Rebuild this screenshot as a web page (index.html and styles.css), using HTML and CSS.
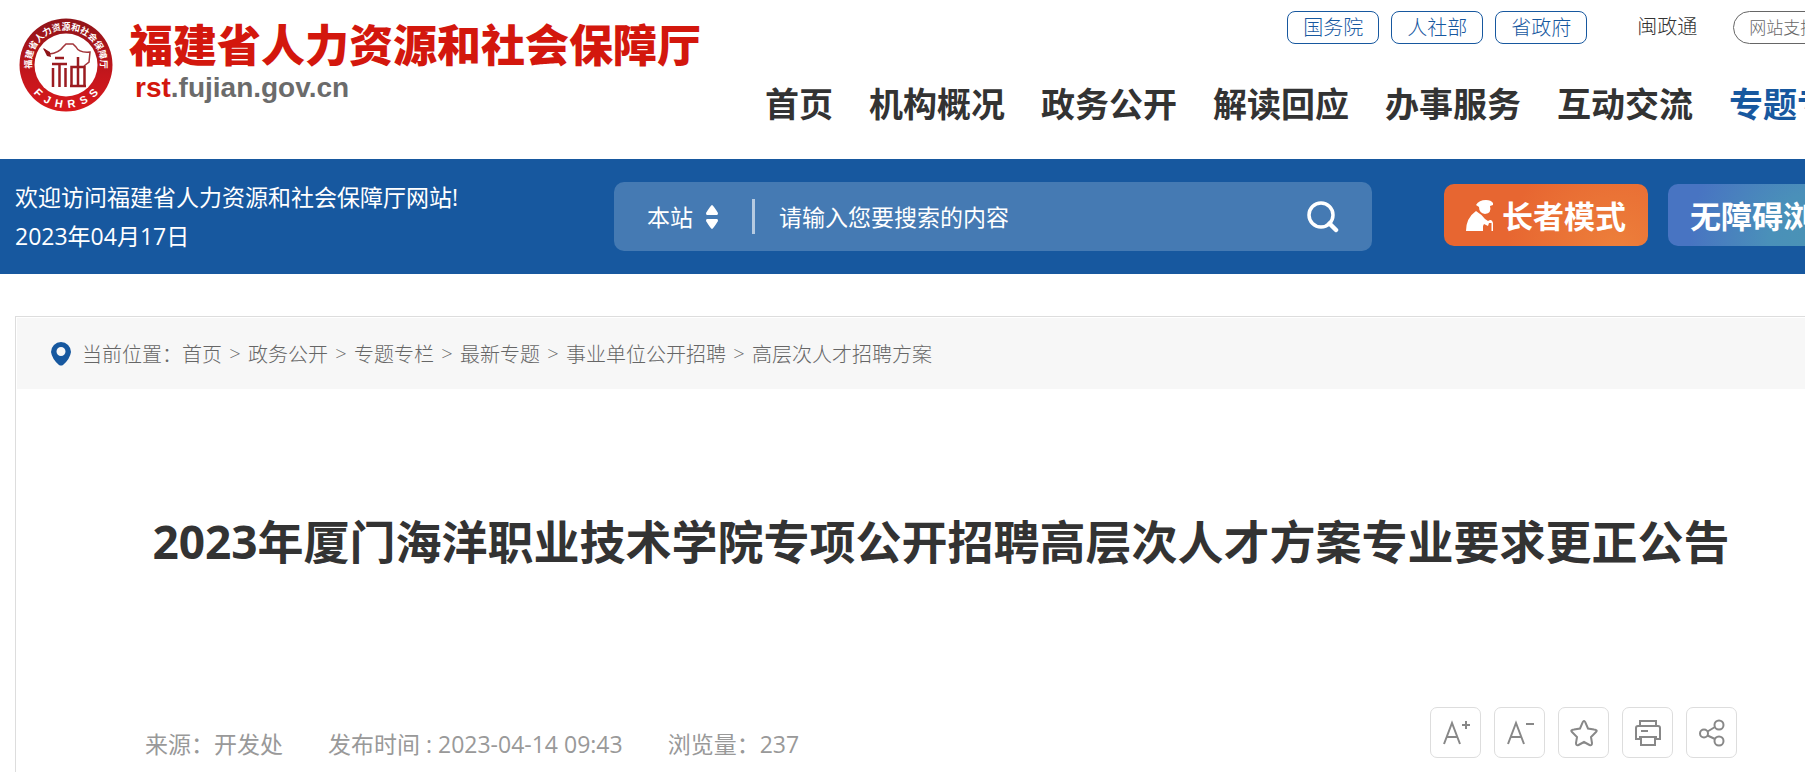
FILE: index.html
```html
<!DOCTYPE html>
<html lang="zh-CN">
<head>
  <meta charset="UTF-8">
  <meta name="viewport" content="width=device-width, initial-scale=1">
  <title>2023年厦门海洋职业技术学院专项公开招聘高层次人才方案专业要求更正公告</title>
  <link rel="stylesheet" href="styles.css">
</head>
<body>

<header class="header">
  <a class="logo" href="#">
    <svg class="emblem" viewBox="0 0 94 94" role="img" aria-label="福建省人力资源和社会保障厅">
      <defs>
        <linearGradient id="ring" x1="0" y1="0" x2="0" y2="1">
          <stop offset="0" stop-color="#8f1419"/>
          <stop offset="0.6" stop-color="#c4161c"/>
          <stop offset="1" stop-color="#d8191c"/>
        </linearGradient>
        <path id="arc-top" d="M13 52 A34.500 34.500 0 1 1 81 52"/>
        <path id="arc-bottom" d="M4 47 A43 43 0 0 0 90 47"/>
      </defs>
      <circle cx="47" cy="47" r="46.500" fill="url(#ring)"/>
      <circle cx="47" cy="47" r="31.500" fill="#fff"/>
      <text class="emblem-cn"><textPath href="#arc-top" startOffset="50%" text-anchor="middle">福建省人力资源和社会保障厅</textPath></text>
      <text class="emblem-en"><textPath href="#arc-bottom" startOffset="50%" text-anchor="middle">F  J  H  R  S  S</textPath></text>
      <!-- roof -->
      <path d="M25 31 L30 36 Q40 35 44 29 L47 26 H54 L57 29 Q60 35 71 34 L70 44 L65 48" fill="none" stroke="#a3363b" stroke-width="1.500"/>
      <path d="M24 30 L31 34 L32 39 L28 38 Z" fill="#8f1419"/>
      <g fill="none" stroke="#9b1b20" stroke-width="2.500">
        <path d="M36 40 H45 M33 46 H48 M34 50 V69 M40.500 46 V69 M46.500 50 V69"/>
        <path d="M52.500 68 V49 H65.500 V68 M59 39 V68 M51 68 H67"/>
      </g>
    </svg>
    <span class="logo-text">
      <span class="logo-name">福建省人力资源和社会保障厅</span>
      <span class="logo-domain"><b>rst</b>.fujian.gov.cn</span>
    </span>
  </a>

  <div class="header-right">
    <div class="top-links">
      <a class="top-box" href="#">国务院</a>
      <a class="top-box" href="#">人社部</a>
      <a class="top-box" href="#">省政府</a>
      <a class="top-plain" href="#">闽政通</a>
      <a class="top-pill" href="#">网站支持IPv6</a>
    </div>
    <nav class="nav">
      <a href="#">首页</a>
      <a href="#">机构概况</a>
      <a href="#">政务公开</a>
      <a href="#">解读回应</a>
      <a href="#">办事服务</a>
      <a href="#">互动交流</a>
      <a class="active" href="#">专题专栏</a>
    </nav>
  </div>
</header>

<div class="banner">
  <div class="welcome">
    <p>欢迎访问福建省人力资源和社会保障厅网站!</p>
    <p>2023年04月17日</p>
  </div>
  <form class="search">
    <label class="search-scope">
      <select aria-label="搜索范围">
        <option>本站</option>
      </select>
      <svg width="12" height="24" viewBox="0 0 12 24" fill="#fff"><path d="M6 0 Q7 0 12 8 Q12 10 11 10 H1 Q0 10 0 8 Q5 0 6 0 Z M1 14 H11 Q12 14 12 16 Q7 24 6 24 Q5 24 0 16 Q0 14 1 14 Z"/></svg>
    </label>
    <input class="search-input" type="text" placeholder="请输入您要搜索的内容" aria-label="搜索内容">
    <button class="search-btn" type="submit" aria-label="搜索">
      <svg width="32" height="32" viewBox="0 0 32 32" fill="none" stroke="#fff" stroke-width="3.500"><circle cx="14" cy="14" r="12"/><path d="M22.500 22.500 L29 29" stroke-width="4.500" stroke-linecap="round"/></svg>
    </button>
  </form>
  <button class="mode elder" type="button">
    <svg width="28" height="32" viewBox="0 0 28 32" fill="#fff"><path d="M10 6 Q13 1 20 1 Q25 1 27 4 L27 6 L24 7 Q26 14 19 15 Q13 14 13 8 Z"/><path d="M0 32 Q0 19 10 12 Q15 15 19 20 L22 22 Q26 19 27 24 V32 H25.500 V24 H23 L22 27 L18 25 L17 27 V32 Z"/></svg>
    长者模式
  </button>
  <button class="mode access" type="button">无障碍浏览</button>
</div>

<main class="main">
  <nav class="crumbs" aria-label="当前位置">
    <svg width="20" height="24" viewBox="0 0 20 24"><path d="M10 0 A10 10 0 0 1 20 10 Q19 17 12 23 Q10 24 8 23 Q1 17 0 10 A10 10 0 0 1 10 0 Z M10 5 A4.500 4.500 0 1 0 10 14 A4.500 4.500 0 1 0 10 5 Z" fill="#17589f"/></svg>
    <span class="crumbs-label">当前位置：</span>
    <a href="#">首页</a><span class="sep">&gt;</span>
    <a href="#">政务公开</a><span class="sep">&gt;</span>
    <a href="#">专题专栏</a><span class="sep">&gt;</span>
    <a href="#">最新专题</a><span class="sep">&gt;</span>
    <a href="#">事业单位公开招聘</a><span class="sep">&gt;</span>
    <a href="#">高层次人才招聘方案</a>
  </nav>

  <article class="article">
    <h1>2023年厦门海洋职业技术学院专项公开招聘高层次人才方案专业要求更正公告</h1>
    <div class="info">
      <div class="meta">
        <span>来源：开发处</span>
        <span>发布时间 : 2023-04-14 09:43</span>
        <span>浏览量：237</span>
      </div>
      <div class="tools">
        <button type="button" aria-label="放大字号">
          <svg viewBox="0 0 28 28"><path d="M2 25 L10 4 L18 25 M5 18 H15 M20 6 H28 M24 2 V10"/></svg>
        </button>
        <button type="button" aria-label="缩小字号">
          <svg viewBox="0 0 28 28"><path d="M2 25 L10 4 L18 25 M5 18 H15 M20 5 H28"/></svg>
        </button>
        <button type="button" aria-label="收藏">
          <svg viewBox="0 0 28 28"><path d="M14 2 Q15 2 16 5 L18 9.500 L24 10.500 Q28 11 26 13 L21 18 L22 24 Q22 27 19.500 26 L14 23 L8.500 26 Q6 27 6 24 L7 18 L2 13 Q0 11 4 10.500 L10 9.500 L12 5 Q13 2 14 2 Z"/></svg>
        </button>
        <button type="button" aria-label="打印">
          <svg viewBox="0 0 28 28"><path d="M6 7 V2 H22 V7 M6 20 H2 V9 Q2 7 4 7 H24 Q26 7 26 9 V20 H22 M5 18 H23 M7 18 V26 H21 V18 M7 12 H14"/></svg>
        </button>
        <button type="button" aria-label="分享">
          <svg viewBox="0 0 28 28"><circle cx="6" cy="14.500" r="4"/><circle cx="21" cy="6" r="4.500"/><circle cx="21" cy="22" r="4.500"/><path d="M9.500 12.500 L17 8 M9.500 16.500 L17 20"/></svg>
        </button>
      </div>
    </div>
  </article>
</main>

</body>
</html>
```
FILE: styles.css
```css
* {
  box-sizing: border-box;
}

body {
  margin: 0;
  min-height: 100vh;
  display: flex;
  flex-direction: column;
  overflow-x: hidden;
  background: #fff;
  color: #333;
  font-family: "Open Sans", "Noto Sans CJK SC", sans-serif;
}

a {
  color: inherit;
  text-decoration: none;
}

button, input, select {
  font-family: inherit;
  border: none;
  padding: 0;
  cursor: pointer;
}

/* header */
.header {
  display: flex;
  height: 159px;
  padding-left: 19px;
  white-space: nowrap;
  overflow: hidden;
}

.logo {
  display: flex;
  flex: none;
  width: 746px;
  padding-top: 18px;
  gap: 16px;
}

.emblem {
  width: 94px;
  height: 94px;
}

.emblem-cn {
  font-size: 9px;
  font-weight: 700;
  fill: #fff;
}

.emblem-en {
  font-family: "Liberation Sans", sans-serif;
  font-size: 11px;
  font-weight: 700;
  fill: #fff;
  white-space: pre;
}

.logo-text {
  display: flex;
  flex-direction: column;
}

.logo-name {
  font-family: "Noto Sans CJK SC", sans-serif;
  font-size: 44px;
  font-weight: 900;
  line-height: 50px;
  color: #d3170d;
}

.logo-domain {
  padding-left: 6px;
  font-family: "Liberation Sans", Arial, sans-serif;
  font-size: 28px;
  font-weight: 700;
  line-height: 40px;
  color: #6b6b6b;
}

.logo-domain b {
  color: #d3170d;
}

.header-right {
  flex: none;
  padding-top: 11px;
}

.top-links {
  display: flex;
  justify-content: flex-end;
  gap: 12px;
  font-size: 20px;
  font-weight: 300;
  line-height: 31px;
}

.top-box {
  padding: 0 15px;
  border: 1px solid #17589f;
  border-radius: 8px;
  color: #17589f;
}

.top-plain {
  margin: 0 24px 0 38px;
}

.top-pill {
  padding: 0 15px;
  border: 1px solid #666;
  border-radius: 17px;
  font-size: 17px;
  color: #666;
}

.nav {
  display: flex;
  gap: 36px;
  margin-top: 35px;
  font-size: 34px;
  font-weight: 700;
  line-height: 50px;
}

.nav .active {
  color: #17589f;
}

/* blue bar */
.banner {
  display: flex;
  align-items: center;
  height: 115px;
  padding-left: 15px;
  background: #17589f;
  color: #fff;
  white-space: nowrap;
  overflow: hidden;
}

.welcome {
  flex: none;
  width: 599px;
  font-size: 23px;
  line-height: 39px;
}

.welcome p {
  margin: 0;
}

.search {
  display: flex;
  flex: none;
  align-items: center;
  width: 42vw;
  height: 69px;
  margin-right: 72px;
  padding: 0 33px;
  border-radius: 10px;
  background: #457ab3;
}

.search-scope {
  display: flex;
  align-items: center;
  gap: 13px;
  height: 35px;
  padding-right: 34px;
  border-right: 3px solid #b5cae1;
}

.search-scope select {
  appearance: none;
  background: none;
  color: #fff;
  font-size: 23px;
}

.search-input {
  flex: 1;
  min-width: 0;
  margin-left: 24px;
  background: none;
  color: #fff;
  font-size: 23px;
  outline: none;
}

.search-input::placeholder {
  color: #fff;
  opacity: 1;
}

.search-btn {
  height: 32px;
  background: none;
}

.mode {
  display: flex;
  flex: none;
  align-items: center;
  gap: 8px;
  height: 62px;
  margin: 0 20px 4px 0;
  padding: 0 22px;
  border-radius: 10px;
  color: #fff;
  font-size: 31px;
  font-weight: 700;
}

.elder {
  background: radial-gradient(circle at 85% 110%, #ed803b, #e76631 60%);
}

.access {
  background: radial-gradient(circle at 75% 90%, #4a93b5, #4a90b9 30%, #4874c2 80%);
}

/* content */
.main {
  flex: 1;
  margin: 42px 0 0 15px;
  padding: 1px 0 0 1px;
  border-top: 1px solid #ddd;
  border-left: 1px solid #ddd;
}

.crumbs {
  display: flex;
  align-items: center;
  height: 71px;
  padding-left: 34px;
  background: #f7f7f7;
  color: #666;
  font-size: 20px;
  font-weight: 300;
  white-space: nowrap;
}

.crumbs-label {
  margin-left: 11px;
}

.sep {
  width: 26px;
  text-align: center;
}

.article {
  padding: 118px 68px 14px 128px;
}

.article h1 {
  margin: 0;
  font-size: 46px;
  font-weight: 700;
  line-height: 68px;
  text-align: center;
  white-space: nowrap;
}

.info {
  display: flex;
  justify-content: space-between;
  margin-top: 132px;
}

.meta {
  display: flex;
  gap: 45px;
  padding-top: 14px;
  color: #999;
  font-size: 23px;
  line-height: 46px;
}

.tools {
  display: flex;
  gap: 13px;
}

.tools button {
  display: flex;
  align-items: center;
  justify-content: center;
  width: 51px;
  height: 51px;
  border: 1px solid #ddd;
  border-radius: 7px;
  background: #fff;
}

.tools svg {
  width: 28px;
  height: 28px;
  fill: none;
  stroke: #888;
  stroke-width: 2;
}
```
